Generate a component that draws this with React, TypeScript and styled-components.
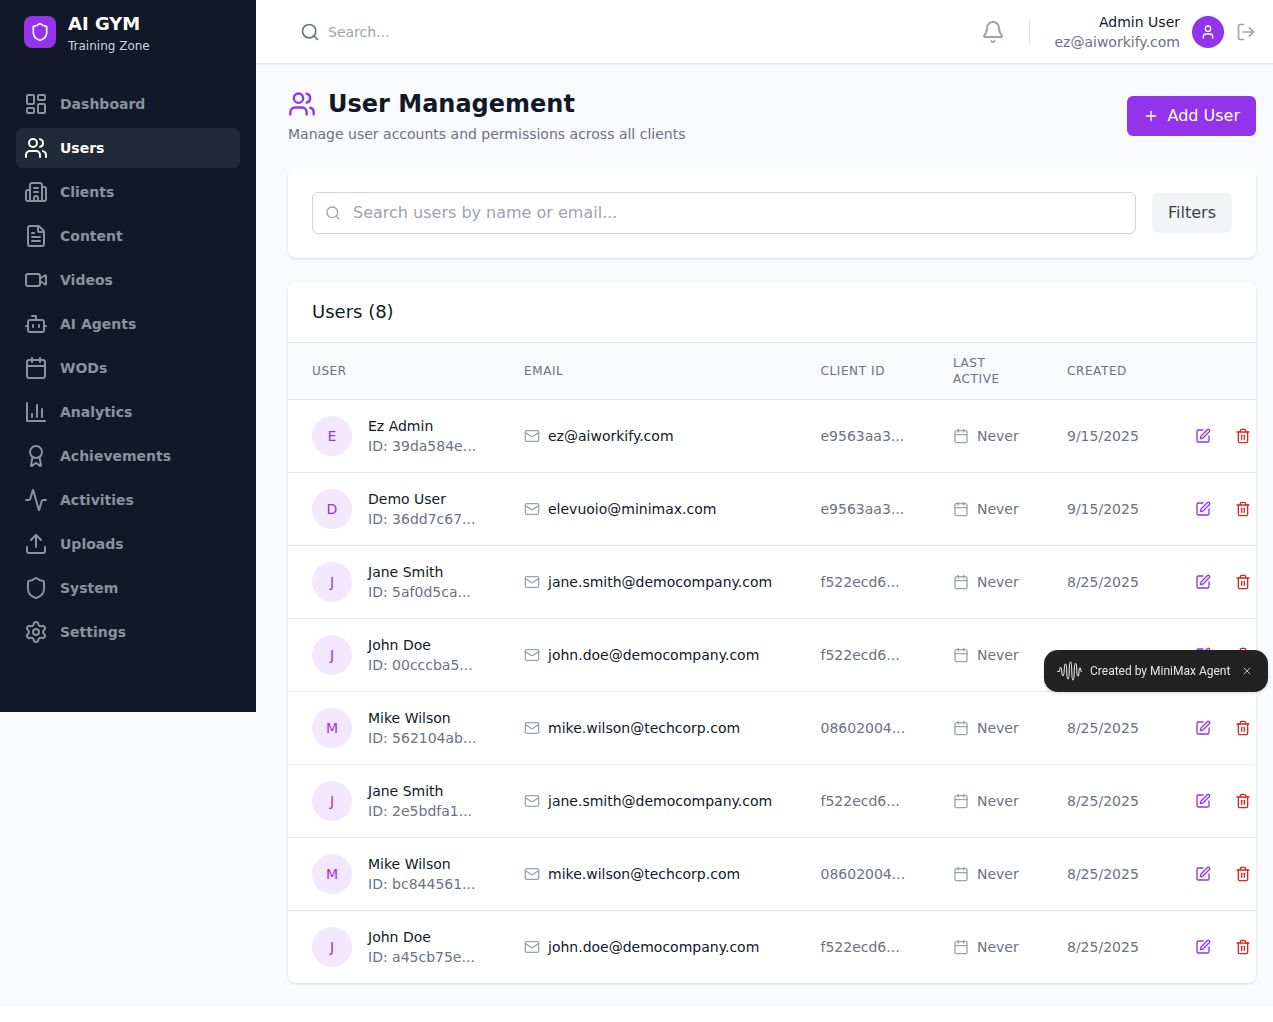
import React from "react";
import styled, { createGlobalStyle } from "styled-components";
import {
  Activity,
  Award,
  Bell,
  Bot,
  Building2,
  Calendar,
  FileText,
  LayoutDashboard,
  LogOut,
  Mail,
  Plus,
  Search,
  Settings,
  Shield,
  SquarePen,
  Trash2,
  Upload,
  User,
  Users,
  Video,
  X,
} from "lucide-react";

const GlobalStyle = createGlobalStyle`
  * { box-sizing: border-box; }
  body {
    margin: 0;
    background: #fff;
    font-family: "DejaVu Sans", sans-serif;
    color: #111827;
  }
`;

const Shell = styled.div`
  display: flex;
  align-items: flex-start;
  background: #f9fafb;
`;

const Sidebar = styled.aside`
  width: 256px;
  height: 712px;
  flex-shrink: 0;
  background: #111827;
  padding: 8px 16px 0;
`;

const Brand = styled.div`
  display: flex;
  align-items: center;
  gap: 12px;
  padding: 0 8px;
  height: 48px;
`;

const BrandMark = styled.div`
  width: 32px;
  height: 32px;
  border-radius: 8px;
  background: #9333ea;
  color: #fff;
  display: flex;
  align-items: center;
  justify-content: center;
`;

const BrandName = styled.div`
  font-size: 18px;
  line-height: 28px;
  font-weight: 700;
  color: #fff;
`;

const BrandSub = styled.div`
  font-size: 12px;
  line-height: 16px;
  color: #d1d5db;
`;

const Nav = styled.nav`
  margin-top: 28px;
  display: flex;
  flex-direction: column;
  gap: 4px;
`;

const NavItem = styled.a<{ $active?: boolean }>`
  display: flex;
  align-items: center;
  gap: 12px;
  height: 40px;
  padding: 0 8px;
  border-radius: 6px;
  font-size: 14px;
  font-weight: 700;
  color: ${(p) => (p.$active ? "#fff" : "#8b919d")};
  background: ${(p) => (p.$active ? "#1f2937" : "transparent")};
`;

const Main = styled.div`
  flex: 1;
  min-width: 0;
`;

const TopBar = styled.header`
  height: 64px;
  background: #fff;
  border-bottom: 1px solid #e5e7eb;
  box-shadow: 0 1px 2px rgba(0, 0, 0, 0.05);
  display: flex;
  align-items: center;
  justify-content: space-between;
  padding: 0 17px 0 44px;
`;

const TopSearch = styled.div`
  display: flex;
  align-items: center;
  gap: 8px;
  font-size: 14px;
  color: #9ca3af;
  svg {
    color: #6b7280;
  }
`;

const TopRight = styled.div`
  display: flex;
  align-items: center;
`;

const BellButton = styled.div`
  display: flex;
  color: #9ca3af;
`;

const Divider = styled.div`
  width: 1px;
  height: 24px;
  background: #e5e7eb;
  margin: 0 24px;
`;

const Who = styled.div`
  text-align: right;
  font-size: 14px;
  line-height: 20px;
`;

const WhoName = styled.div`
  color: #111827;
`;

const WhoMail = styled.div`
  color: #6b7280;
`;

const TopAvatar = styled.div`
  width: 32px;
  height: 32px;
  border-radius: 50%;
  margin-left: 12px;
  background: #9333ea;
  color: #fff;
  display: flex;
  align-items: center;
  justify-content: center;
`;

const LogoutButton = styled.div`
  display: flex;
  margin-left: 12px;
  color: #9ca3af;
`;

const Content = styled.main`
  padding: 24px 17px 24px 32px;
`;

const PageHead = styled.div`
  display: flex;
  align-items: center;
  justify-content: space-between;
  margin-bottom: 24px;
`;

const TitleRow = styled.div`
  display: flex;
  align-items: center;
  gap: 12px;
  color: #9333ea;
`;

const Title = styled.h1`
  margin: 0;
  font-size: 24px;
  line-height: 32px;
  font-weight: 700;
  color: #111827;
`;

const Subtitle = styled.p`
  margin: 4px 0 0;
  font-size: 14px;
  line-height: 20px;
  color: #6b7280;
`;

const AddButton = styled.button`
  display: flex;
  align-items: center;
  gap: 8px;
  height: 40px;
  padding: 0 16px;
  border: 0;
  border-radius: 6px;
  background: #9333ea;
  color: #fff;
  font-family: inherit;
  font-size: 16px;
  line-height: 24px;
`;

const Card = styled.section`
  background: #fff;
  border-radius: 8px;
  box-shadow: 0 1px 3px rgba(0, 0, 0, 0.1), 0 1px 2px -1px rgba(0, 0, 0, 0.1);
`;

const FilterCard = styled(Card)`
  display: flex;
  align-items: center;
  gap: 16px;
  padding: 24px;
  margin-bottom: 24px;
`;

const SearchField = styled.div`
  flex: 1;
  height: 42px;
  display: flex;
  align-items: center;
  gap: 12px;
  padding: 0 12px;
  border: 1px solid #d1d5db;
  border-radius: 6px;
  font-size: 16px;
  line-height: 24px;
  color: #9ca3af;
`;

const FiltersButton = styled.button`
  height: 40px;
  padding: 0 16px;
  border: 0;
  border-radius: 6px;
  background: #f3f4f6;
  color: #374151;
  font-family: inherit;
  font-size: 16px;
  line-height: 24px;
`;

const TableCard = styled(Card)`
  overflow: hidden;
`;

const TableTitle = styled.h2`
  margin: 0;
  padding: 16px 24px;
  height: 61px;
  font-size: 18px;
  line-height: 28px;
  font-weight: 400;
  color: #111827;
  border-bottom: 1px solid #e5e7eb;
`;

const Table = styled.table`
  width: 968px;
  table-layout: fixed;
  border-collapse: collapse;
`;

const HeadCell = styled.th`
  padding: 12px 24px;
  height: 56px;
  background: #f9fafb;
  border-bottom: 1px solid #e5e7eb;
  text-align: left;
  font-size: 12px;
  line-height: 16px;
  font-weight: 400;
  letter-spacing: 0.6px;
  text-transform: uppercase;
  color: #6b7280;
`;

const Row = styled.tr`
  border-bottom: 1px solid #e5e7eb;
  &:last-child {
    border-bottom: 0;
  }
  &:last-child td {
    height: 72px;
  }
`;

const Cell = styled.td`
  height: 73px;
  padding: 0 24px;
  font-size: 14px;
  line-height: 20px;
  color: #6b7280;
  white-space: nowrap;
`;

const UserWrap = styled.div`
  display: flex;
  align-items: center;
  gap: 16px;
`;

const Initial = styled.div`
  width: 40px;
  height: 40px;
  border-radius: 50%;
  flex-shrink: 0;
  background: #f3e8ff;
  color: #9333ea;
  display: flex;
  align-items: center;
  justify-content: center;
`;

const UserName = styled.div`
  color: #111827;
`;

const IconText = styled.div<{ $dark?: boolean }>`
  display: flex;
  align-items: center;
  gap: 8px;
  color: ${(p) => (p.$dark ? "#111827" : "#6b7280")};
  svg {
    color: #9ca3af;
    flex-shrink: 0;
  }
`;

const Actions = styled.div`
  display: flex;
  align-items: center;
  gap: 24px;
`;

const ActionIcon = styled.span<{ $tone: string }>`
  display: flex;
  color: ${(p) => p.$tone};
`;

const Toast = styled.div`
  position: fixed;
  top: 650px;
  left: 1044px;
  width: 224px;
  height: 42px;
  display: flex;
  align-items: center;
  padding: 0 15px 0 13px;
  background: #222222;
  border-radius: 14px;
  box-shadow: 0 1px 3px rgba(0, 0, 0, 0.15);
  font-family: Roboto, sans-serif;
  font-size: 12px;
  color: #e5e5e5;
`;

const ToastText = styled.span`
  margin-left: 7px;
  flex: 1;
  white-space: nowrap;
`;

// the square-cornered bar chart, lucide's current one has a rounded axis
function BarsIcon() {
  return (
    <svg width="24" height="24" viewBox="0 0 24 24" fill="none" stroke="currentColor" strokeWidth="2" strokeLinecap="round" strokeLinejoin="round">
      <path d="M3 3v18h18" />
      <path d="M18 17V9" />
      <path d="M13 17V5" />
      <path d="M8 17v-3" />
    </svg>
  );
}

const navItems = [
  { label: "Dashboard", icon: <LayoutDashboard size={24} /> },
  { label: "Users", icon: <Users size={24} />, active: true },
  { label: "Clients", icon: <Building2 size={24} /> },
  { label: "Content", icon: <FileText size={24} /> },
  { label: "Videos", icon: <Video size={24} /> },
  { label: "AI Agents", icon: <Bot size={24} /> },
  { label: "WODs", icon: <Calendar size={24} /> },
  { label: "Analytics", icon: <BarsIcon /> },
  { label: "Achievements", icon: <Award size={24} /> },
  { label: "Activities", icon: <Activity size={24} /> },
  { label: "Uploads", icon: <Upload size={24} /> },
  { label: "System", icon: <Shield size={24} /> },
  { label: "Settings", icon: <Settings size={24} /> },
];

const users = [
  { name: "Ez Admin", id: "39da584e...", email: "ez@aiworkify.com", client: "e9563aa3...", created: "9/15/2025" },
  { name: "Demo User", id: "36dd7c67...", email: "elevuoio@minimax.com", client: "e9563aa3...", created: "9/15/2025" },
  { name: "Jane Smith", id: "5af0d5ca...", email: "jane.smith@democompany.com", client: "f522ecd6...", created: "8/25/2025" },
  { name: "John Doe", id: "00cccba5...", email: "john.doe@democompany.com", client: "f522ecd6...", created: "8/25/2025" },
  { name: "Mike Wilson", id: "562104ab...", email: "mike.wilson@techcorp.com", client: "08602004...", created: "8/25/2025" },
  { name: "Jane Smith", id: "2e5bdfa1...", email: "jane.smith@democompany.com", client: "f522ecd6...", created: "8/25/2025" },
  { name: "Mike Wilson", id: "bc844561...", email: "mike.wilson@techcorp.com", client: "08602004...", created: "8/25/2025" },
  { name: "John Doe", id: "a45cb75e...", email: "john.doe@democompany.com", client: "f522ecd6...", created: "8/25/2025" },
];

const columns = [
  { label: "User", width: 212 },
  { label: "Email", width: 296.5 },
  { label: "Client ID", width: 132.5 },
  { label: "Last Active", width: 114 },
  { label: "Created", width: 128 },
  { label: "", width: 85 },
];

// peaks of the wave, x then y, joined with steep curves
const wavePeaks = [
  [0.5, 10.5], [2, 10.5], [3.5, 6.5], [6, 14.5], [8.5, 3], [11, 18], [13.5, 1],
  [16, 19], [18.5, 2.5], [21, 15], [23, 7], [24.5, 10.5],
];

function Waveform() {
  let d = `M${wavePeaks[0][0]} ${wavePeaks[0][1]}`;
  for (let i = 1; i < wavePeaks.length; i++) {
    const [x0, y0] = wavePeaks[i - 1];
    const [x1, y1] = wavePeaks[i];
    const bend = (x1 - x0) * 0.9;
    d += `C${x0 + bend} ${y0} ${x1 - bend} ${y1} ${x1} ${y1}`;
  }
  return (
    <svg width="26" height="20" viewBox="0 0 26 20" fill="none" stroke="#e5e5e5" strokeWidth="1.1" strokeLinecap="round">
      <path d={d} />
    </svg>
  );
}

export default function App() {
  return (
    <>
      <GlobalStyle />
      <Shell>
        <Sidebar>
          <Brand>
            <BrandMark>
              <Shield size={20} />
            </BrandMark>
            <div>
              <BrandName>AI GYM</BrandName>
              <BrandSub>Training Zone</BrandSub>
            </div>
          </Brand>
          <Nav>
            {navItems.map((item) => (
              <NavItem key={item.label} $active={item.active}>
                {item.icon}
                {item.label}
              </NavItem>
            ))}
          </Nav>
        </Sidebar>
        <Main>
          <TopBar>
            <TopSearch>
              <Search size={20} />
              Search...
            </TopSearch>
            <TopRight>
              <BellButton>
                <Bell size={24} />
              </BellButton>
              <Divider />
              <Who>
                <WhoName>Admin User</WhoName>
                <WhoMail>ez@aiworkify.com</WhoMail>
              </Who>
              <TopAvatar>
                <User size={16} />
              </TopAvatar>
              <LogoutButton>
                <LogOut size={20} />
              </LogoutButton>
            </TopRight>
          </TopBar>
          <Content>
            <PageHead>
              <div>
                <TitleRow>
                  <Users size={28} />
                  <Title>User Management</Title>
                </TitleRow>
                <Subtitle>Manage user accounts and permissions across all clients</Subtitle>
              </div>
              <AddButton>
                <Plus size={16} />
                Add User
              </AddButton>
            </PageHead>
            <FilterCard>
              <SearchField>
                <Search size={16} />
                Search users by name or email...
              </SearchField>
              <FiltersButton>Filters</FiltersButton>
            </FilterCard>
            <TableCard>
              <TableTitle>Users (8)</TableTitle>
              <Table>
                <colgroup>
                  {columns.map((c) => (
                    <col key={c.label} width={c.width} />
                  ))}
                </colgroup>
                <thead>
                  <tr>
                    {columns.map((c) => (
                      <HeadCell key={c.label}>{c.label}</HeadCell>
                    ))}
                  </tr>
                </thead>
                <tbody>
                  {users.map((u) => (
                    <Row key={u.id}>
                      <Cell>
                        <UserWrap>
                          <Initial>{u.name[0]}</Initial>
                          <div>
                            <UserName>{u.name}</UserName>
                            <div>ID: {u.id}</div>
                          </div>
                        </UserWrap>
                      </Cell>
                      <Cell>
                        <IconText $dark>
                          <Mail size={16} />
                          {u.email}
                        </IconText>
                      </Cell>
                      <Cell>{u.client}</Cell>
                      <Cell>
                        <IconText>
                          <Calendar size={16} />
                          Never
                        </IconText>
                      </Cell>
                      <Cell>{u.created}</Cell>
                      <Cell>
                        <Actions>
                          <ActionIcon $tone="#9333ea">
                            <SquarePen size={16} />
                          </ActionIcon>
                          <ActionIcon $tone="#dc2626">
                            <Trash2 size={16} />
                          </ActionIcon>
                        </Actions>
                      </Cell>
                    </Row>
                  ))}
                </tbody>
              </Table>
            </TableCard>
          </Content>
        </Main>
      </Shell>
      <Toast>
        <Waveform />
        <ToastText>Created by MiniMax Agent</ToastText>
        <X size={12} color="#bdbdbd" />
      </Toast>
    </>
  );
}
